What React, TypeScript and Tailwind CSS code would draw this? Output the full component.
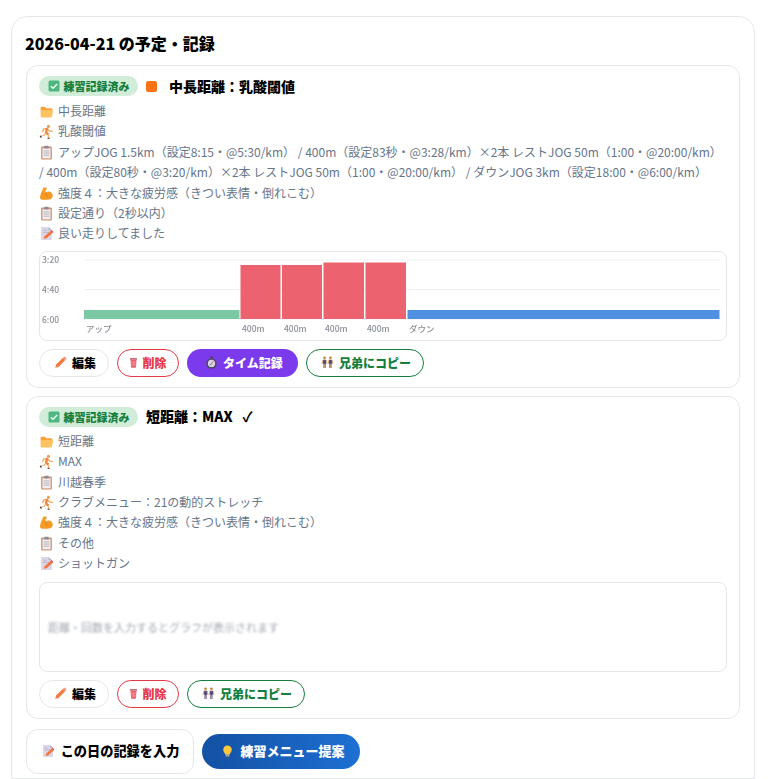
import React from "react";

const font = { fontFamily: '"Noto Sans CJK JP", "Noto Sans", sans-serif' };

type IconProps = { className?: string };

function CheckIcon({ className }: IconProps) {
  return (
    <svg viewBox="0 0 12 12" className={className}>
      <rect x="0.5" y="0.5" width="11" height="11" rx="1.5" fill="#4cb87f" />
      <path d="M2.8 6.2 5 8.3 9.2 3.9" fill="none" stroke="#f2fbf5" strokeWidth="1.5" />
    </svg>
  );
}

function FolderIcon({ className }: IconProps) {
  return (
    <svg viewBox="0 0 14 14" className={className}>
      <path d="M1.5 3.5a1 1 0 0 1 1-1h3l1.4 1.5h4.6a1 1 0 0 1 1 1V6H1.5z" fill="#f9a23c" />
      <path d="M1.5 5.6h10.7a.9.9 0 0 1 .9 1.1l-1 5a1 1 0 0 1-1 .8H2.500a1 1 0 0 1-1-1z" fill="#ffc261" />
    </svg>
  );
}

function RunnerIcon({ className }: IconProps) {
  return (
    <svg viewBox="0 0 14 14" className={className}>
      <circle cx="8.800" cy="2.300" r="1.500" fill="#e9a15f" />
      <path d="M7.500 4 4.300 4.800 3.400 7M7.600 4.200l2 2.300 2.700.4" fill="none" stroke="#f5a25a" strokeWidth="1.200" strokeLinecap="round" />
      <path d="M7.600 4 6.500 8 8.800 9.800" fill="none" stroke="#f0803c" strokeWidth="2.200" strokeLinejoin="round" />
      <path d="M6.400 8.300 4.800 10.700 1.800 11M8.800 9.800 8.800 13" fill="none" stroke="#f5b070" strokeWidth="1.100" strokeLinecap="round" />
      <path d="M1 11.200 2.400 12.600M8 13.300H10" fill="none" stroke="#3a3a4a" strokeWidth="1.100" />
    </svg>
  );
}

function ClipboardIcon({ className }: IconProps) {
  return (
    <svg viewBox="0 0 14 14" className={className}>
      <rect x="2" y="1.500" width="10" height="12" rx="1" fill="#cf8f6c" />
      <rect x="3.200" y="3" width="7.600" height="9.500" fill="#f1eef0" />
      <rect x="5" y="0.800" width="4" height="2.400" rx=".5" fill="#8d8a97" />
      <path d="M4.300 5.500h5.400M4.300 7.500h5.400M4.300 9.500h5.400" stroke="#a9a6b4" strokeWidth=".8" />
    </svg>
  );
}

function MuscleIcon({ className }: IconProps) {
  return (
    <svg viewBox="0 0 14 14" className={className}>
      <path d="M4.300 1.500 6.800 1.300 7.400 3 6 4 6.200 6.200C7.500 5 10 4.700 11.500 6 13.300 7.500 13.300 10.500 11.500 12 10 13 6 13 3 12.800 1.500 12.700.7 11.500 1 10 1.400 7.500 3 4 4.300 1.500Z" fill="#f59a23" />
      <path d="M6.200 6.200C6 8 7 9.500 8.200 9.800" fill="none" stroke="#d97a10" strokeWidth=".8" />
    </svg>
  );
}

function MemoIcon({ className }: IconProps) {
  return (
    <svg viewBox="0 0 14 14" className={className}>
      <path d="M2 1h7l3 3v9H2z" fill="#dcd6e6" />
      <path d="M9 1v3h3z" fill="#b9b1c9" />
      <path d="M3.500 4h4M3.500 6h6" stroke="#b9b1c9" strokeWidth=".8" />
      <path d="M4.500 11.800 5 9.700 10.800 4.600 12.600 6.500 7 11.500Z" fill="#f4743b" />
      <path d="M10.800 4.600 11.700 3.800 13.400 5.700 12.600 6.500Z" fill="#e8453c" />
    </svg>
  );
}

function PencilIcon({ className }: IconProps) {
  return (
    <svg viewBox="0 0 14 14" className={className}>
      <path d="M1.300 12.800 2.200 9.200 9.700 1.900 12.200 4.400 4.900 11.900Z" fill="#f4793f" />
      <path d="M9.700 1.900 10.800.900C11.200.600 11.600.600 12 .900L13.100 2C13.500 2.400 13.500 2.900 13.100 3.400L12.200 4.400Z" fill="#f29a8b" />
      <path d="M1.300 12.800 1.800 10.700 3.400 12.300Z" fill="#f7c6a3" />
    </svg>
  );
}

function TrashIcon({ className }: IconProps) {
  return (
    <svg viewBox="0 0 10 12" className={className}>
      <rect x="1" y="1" width="8" height="2" rx=".6" fill="#c7707a" />
      <path d="M1.700 3h6.600L7.800 11a.8.8 0 0 1-.8.7H3a.8.8 0 0 1-.8-.7Z" fill="#e8606e" />
      <path d="M3.300 4.500v5.500M5 4.500v5.500M6.700 4.500v5.500" stroke="#f4a5ae" strokeWidth=".7" />
    </svg>
  );
}

function WatchIcon({ className }: IconProps) {
  return (
    <svg viewBox="0 0 14 14" className={className}>
      <rect x="5.700" y="0.500" width="2.600" height="1.800" fill="#4a4458" />
      <circle cx="7" cy="8" r="5.700" fill="#4e4860" />
      <circle cx="7" cy="8" r="3.900" fill="#d8d3e6" />
      <path d="M7 8 9 5.800" stroke="#e8453c" strokeWidth="1" />
      <path d="M7 8 5.500 10" stroke="#4e4860" strokeWidth=".8" />
    </svg>
  );
}

function PeopleIcon({ className }: IconProps) {
  return (
    <svg viewBox="0 0 14 14" className={className}>
      <circle cx="3.800" cy="2" r="1.500" fill="#c98a3a" />
      <circle cx="10.200" cy="2" r="1.500" fill="#c98a3a" />
      <path d="M2 4h3.600l.6 4H5v5H2.700V8H1.400Z" fill="#5a4a78" />
      <path d="M8.400 4H12l.6 4h-1.300v5H9V8H7.800Z" fill="#5a4a78" />
      <path d="M2 4.800 .9 8M5.600 4.800l.9 3.200M8.400 4.800 7.500 8M12 4.800l1.100 3.200" stroke="#eab676" strokeWidth="1" />
      <path d="M3.800 9v4M10.200 9v4" stroke="#eab676" strokeWidth=".8" />
    </svg>
  );
}

function BulbIcon({ className }: IconProps) {
  return (
    <svg viewBox="0 0 14 14" className={className}>
      <path d="M7 .500C4.300.500 2.400 2.500 2.400 5c0 2.400 1.800 3.200 2.400 5.500h4.400C9.800 8.200 11.600 7.400 11.600 5 11.600 2.500 9.700.500 7 .500Z" fill="#ffc53d" />
      <rect x="5" y="10.500" width="4" height="2" fill="#a3a8b8" />
      <rect x="5.700" y="12.500" width="2.600" height="1" fill="#5f6478" />
    </svg>
  );
}

function Row({ icon, children }: { icon: React.ReactNode; children: React.ReactNode }) {
  return (
    <div className="text-[12px] leading-[20.4px] text-[#66758a]">
      {icon}
      {children}
    </div>
  );
}

const rowIcon = "mr-1 inline-block h-[15px] w-[15px] align-[-3px]";

function Badge() {
  return (
    <span className="flex h-5 w-[99px] items-center justify-center gap-[4px] rounded-full bg-[#d1ecd9] text-[11px] font-black text-[#15803d]">
      <CheckIcon className="h-[12px] w-[12px]" />
      練習記録済み
    </span>
  );
}

function Pill({ className, children }: { className: string; children: React.ReactNode }) {
  return (
    <button className={`flex h-7 items-center justify-center rounded-full text-[12px] font-black ${className}`}>
      {children}
    </button>
  );
}

function Actions({ timed }: { timed?: boolean }) {
  return (
    <div className="mt-2 flex gap-2">
      <Pill className="w-[70px] gap-[5px] border border-[#e5e7eb] bg-white pl-[2px] text-black">
        <PencilIcon className="h-[13px] w-[13px]" />
        編集
      </Pill>
      <Pill className="w-[62px] gap-[4px] border border-[#e63946] bg-white text-[#e63946]">
        <TrashIcon className="h-[11px] w-[9px]" />
        削除
      </Pill>
      {timed && (
        <Pill className="w-[111px] gap-[5px] bg-[#7c3aed] pl-[3px] text-white">
          <WatchIcon className="h-[13px] w-[13px]" />
          タイム記録
        </Pill>
      )}
      <Pill className="w-[118px] gap-[5px] border border-[#15803d] bg-white pl-[2px] text-[#15803d]">
        <PeopleIcon className="h-[13px] w-[13px]" />
        兄弟にコピー
      </Pill>
    </div>
  );
}

function Chart() {
  return (
    <div className="mt-[7px] h-[90px] rounded-lg border border-[#e5e7eb] bg-white">
      <svg width="686" height="88" viewBox="0 0 686 88" className="blur-[0.7px]">
        <g stroke="#eef0f6">
          <line x1="44" x2="680" y1="8" y2="8" />
          <line x1="44" x2="680" y1="37.500" y2="37.500" />
          <line x1="44" x2="680" y1="67" y2="67" />
        </g>
        <g fontSize="8.500" fill="#8b8f97" fontWeight="500" style={font}>
          <text x="2" y="11">3:20</text>
          <text x="2" y="41">4:40</text>
          <text x="2" y="71">6:00</text>
          <text x="46" y="80">アップ</text>
          <text x="202" y="80">400m</text>
          <text x="244" y="80">400m</text>
          <text x="285" y="80">400m</text>
          <text x="327" y="80">400m</text>
          <text x="369" y="80">ダウン</text>
        </g>
        <rect x="44" y="58" width="155.500" height="9" fill="#7bc8a4" />
        <rect x="200.500" y="13" width="40" height="54" fill="#ec626e" />
        <rect x="242" y="13" width="40" height="54" fill="#ec626e" />
        <rect x="283.500" y="10.500" width="40.500" height="56.500" fill="#ec626e" />
        <rect x="325.500" y="10.500" width="40.500" height="56.500" fill="#ec626e" />
        <rect x="367.500" y="58" width="312" height="9" fill="#4f90e0" />
      </svg>
    </div>
  );
}

export default function App() {
  return (
    <div style={font} className="min-h-[779px] bg-white pl-[11px] pr-[13px] pt-4">
      <div className="rounded-t-2xl border border-[#e5e7eb] px-[14px] pt-[15px] pb-[4px]">
        <h2 className="-ml-px text-[16px] leading-[22px] font-black text-black">2026-04-21 の予定・記録</h2>
        <div className="mt-[11px] rounded-xl border border-[#e5e7eb] px-3 pt-[9px] pb-[10px]">
          <div className="flex h-[22px] items-center">
            <Badge />
            <span className="ml-2 h-[11px] w-[11px] rounded-[2px] bg-[#f97316]" />
            <span className="ml-[12px] text-[14px] font-black text-black">中長距離：乳酸閾値</span>
          </div>
          <div className="mt-[4px]">
            <Row icon={<FolderIcon className={rowIcon} />}>中長距離</Row>
            <Row icon={<RunnerIcon className={rowIcon} />}>乳酸閾値</Row>
            <Row icon={<ClipboardIcon className={rowIcon} />}>アップJOG 1.5km（設定8:15・@5:30/km） / 400m（設定83秒・@3:28/km）×2本 レストJOG 50m（1:00・@20:00/km） / 400m（設定80秒・@3:20/km）×2本 レストJOG 50m（1:00・@20:00/km） / ダウンJOG 3km（設定18:00・@6:00/km）</Row>
            <Row icon={<MuscleIcon className={rowIcon} />}>強度４：大きな疲労感（きつい表情・倒れこむ）</Row>
            <Row icon={<ClipboardIcon className={rowIcon} />}>設定通り（2秒以内）</Row>
            <Row icon={<MemoIcon className={rowIcon} />}>良い走りしてました</Row>
          </div>
          <Chart />
          <Actions timed />
        </div>
        <div className="mt-[8px] rounded-xl border border-[#e5e7eb] px-3 pt-[9px] pb-[10px]">
          <div className="flex h-[22px] items-center">
            <Badge />
            <span className="ml-2 text-[14px] font-black text-black">短距離：MAX</span>
            <span className="ml-[10px] text-[14px] font-bold text-black">✓</span>
          </div>
          <div className="mt-[3px]">
            <Row icon={<FolderIcon className={rowIcon} />}>短距離</Row>
            <Row icon={<RunnerIcon className={rowIcon} />}>MAX</Row>
            <Row icon={<ClipboardIcon className={rowIcon} />}>川越春季</Row>
            <Row icon={<RunnerIcon className={rowIcon} />}>クラブメニュー：21の動的ストレッチ</Row>
            <Row icon={<MuscleIcon className={rowIcon} />}>強度４：大きな疲労感（きつい表情・倒れこむ）</Row>
            <Row icon={<ClipboardIcon className={rowIcon} />}>その他</Row>
            <Row icon={<MemoIcon className={rowIcon} />}>ショットガン</Row>
          </div>
          <div className="mt-[8px] flex h-[90px] items-center rounded-lg border border-[#e5e7eb] pl-2 pt-[2px] text-[11px] text-[#a4a9b2]">
            <span className="blur-[0.9px]">距離・回数を入力するとグラフが表示されます</span>
          </div>
          <Actions />
        </div>
        <div className="mt-[10px] flex items-center gap-2">
          <button className="flex h-[45px] w-[168px] items-center justify-center gap-[6px] rounded-xl border border-[#e5e7eb] bg-white text-[13.200px] font-black text-black">
            <MemoIcon className="h-[14px] w-[14px]" />
            この日の記録を入力
          </button>
          <button className="flex h-[35px] w-[158px] items-center justify-center gap-[6px] rounded-full bg-gradient-to-r from-[#1351a3] to-[#1e70d4] pl-[4px] text-[13px] font-black text-white">
            <BulbIcon className="h-[13px] w-[13px]" />
            練習メニュー提案
          </button>
        </div>
      </div>
    </div>
  );
}
